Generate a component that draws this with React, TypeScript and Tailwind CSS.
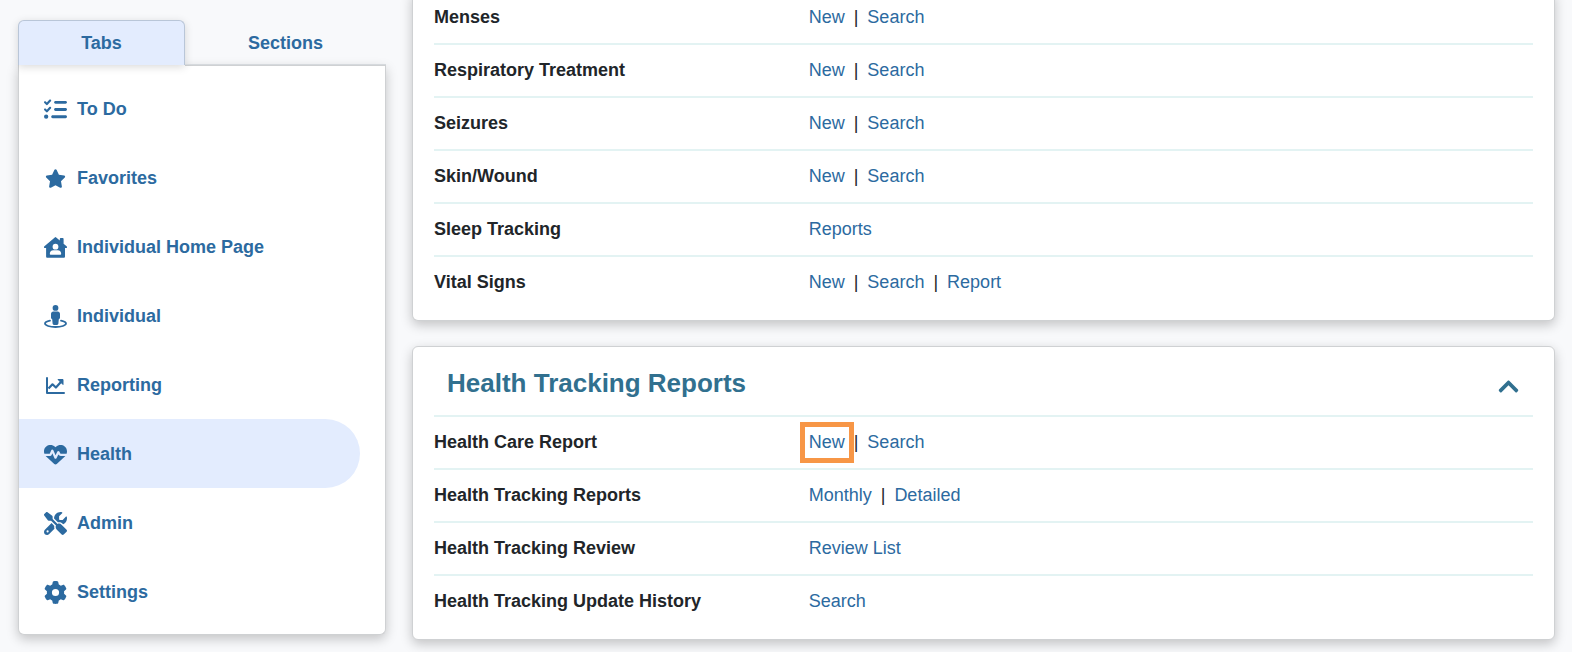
import { useState } from 'react';
import type { IconType } from 'react-icons';
import { FaChevronUp } from 'react-icons/fa';
import { FaGear, FaHeartPulse, FaListCheck, FaScrewdriverWrench, FaStar } from 'react-icons/fa6';

type Row = { label: string; links: string[]; marked?: string };

const ChartIcon = ({ className }: { className?: string }) => (
  <svg viewBox="0 0 19 17" fill="none" stroke="currentColor" className={className} aria-hidden="true">
    <path d="M1 1v15h17" strokeWidth="2" strokeLinecap="round" strokeLinejoin="round" />
    <path d="M2.5 11.5l4-4.2 3.4 3.2 5-5.4" strokeWidth="2.2" strokeLinejoin="round" />
    <path d="M12 2.5h5v5z" fill="currentColor" strokeWidth="1" strokeLinejoin="round" />
  </svg>
);

const HomeUserIcon = ({ className }: { className?: string }) => (
  <svg viewBox="0 0 23 21" className={className} aria-hidden="true">
    <path
      fill="currentColor"
      fillRule="evenodd"
      d="M10.8.4a1 1 0 0 1 1.4 0L15.8 3.4V2a.9.9 0 0 1 .9-.9h2a.9.9 0 0 1 .9.9v4.7l3 2.6c.8.8.4 1.8-.6 1.8h-1v8.4c0 .8-.5 1.3-1.3 1.3H3.400c-.8 0-1.3-.5-1.3-1.3v-8.4H1c-1 0-1.4-1-.6-1.8zM11.500 6.800a2.9 2.9 0 1 0 0 5.800 2.9 2.9 0 0 0 0-5.8zM9.300 13.300c-2.2 0-3.5 1.5-3.5 3.6 0 .5.3.8.8.8h9.8c.5 0 .8-.3.8-.8 0-2.1-1.3-3.6-3.5-3.6z"
    />
  </svg>
);

const PersonRingIcon = ({ className }: { className?: string }) => (
  <svg viewBox="0 0 23 23" fill="currentColor" className={className} aria-hidden="true">
    <circle cx="11.500" cy="2.900" r="2.900" />
    <path d="M9.300 6.600h4.400c1.300 0 2.300 1 2.300 2.300v3.700c0 .8-.5 1.400-1.200 1.600l-.4 4.400c-.1.800-.6 1.300-1.400 1.300H10c-.8 0-1.300-.5-1.400-1.300l-.4-4.400C7.500 14 7 13.400 7 12.600V8.900c0-1.300 1-2.300 2.300-2.300z" />
    <path
      d="M6 15.600c-3 .6-5 1.700-5 3 0 1.900 4.700 3.400 10.500 3.400S22 20.500 22 18.600c0-1.300-2-2.400-5-3"
      fill="none"
      stroke="currentColor"
      strokeWidth="1.800"
      strokeLinecap="round"
    />
  </svg>
);

const NAV: { label: string; icon: IconType | typeof ChartIcon; size: string }[] = [
  { label: 'To Do', icon: FaListCheck, size: 'size-[23px]' },
  { label: 'Favorites', icon: FaStar, size: 'size-[21px]' },
  { label: 'Individual Home Page', icon: HomeUserIcon, size: 'w-[23px] h-[21px]' },
  { label: 'Individual', icon: PersonRingIcon, size: 'size-[23px]' },
  { label: 'Reporting', icon: ChartIcon, size: 'w-[19px] h-[17px]' },
  { label: 'Health', icon: FaHeartPulse, size: 'size-[23px]' },
  { label: 'Admin', icon: FaScrewdriverWrench, size: 'size-[23px]' },
  { label: 'Settings', icon: FaGear, size: 'size-[23px]' },
];

const TRACKING: Row[] = [
  { label: 'Menses', links: ['New', 'Search'] },
  { label: 'Respiratory Treatment', links: ['New', 'Search'] },
  { label: 'Seizures', links: ['New', 'Search'] },
  { label: 'Skin/Wound', links: ['New', 'Search'] },
  { label: 'Sleep Tracking', links: ['Reports'] },
  { label: 'Vital Signs', links: ['New', 'Search', 'Report'] },
];

const REPORTS: Row[] = [
  { label: 'Health Care Report', links: ['New', 'Search'], marked: 'New' },
  { label: 'Health Tracking Reports', links: ['Monthly', 'Detailed'] },
  { label: 'Health Tracking Review', links: ['Review List'] },
  { label: 'Health Tracking Update History', links: ['Search'] },
];

function LinkTable({ rows }: { rows: Row[] }) {
  return (
    <table className="w-full border-separate border-spacing-0 text-lg leading-[23px]">
      <tbody className="[&>tr:not(:last-child)>*]:border-b-2">
        {rows.map((row) => (
          <tr key={row.label}>
            <th scope="row" className="w-[34%] border-[#e3f3f3] py-[14px] text-left font-bold text-[#212529]">
              {row.label}
            </th>
            <td className="border-[#e3f3f3] py-[14px] pl-px">
              {row.links.map((link, i) => (
                <span key={link}>
                  {i > 0 && <span className="px-[9px] text-[#212529]">|</span>}
                  <a
                    href="#"
                    className={`inline-block text-[#2c6aa0] hover:underline ${
                      row.marked === link ? 'outline-5 outline-offset-4 outline-[#f79646]' : ''
                    }`}
                  >
                    {link}
                  </a>
                </span>
              ))}
            </td>
          </tr>
        ))}
      </tbody>
    </table>
  );
}

export default function App() {
  const [tab, setTab] = useState('Tabs');
  const [open, setOpen] = useState(true);

  return (
    <div className="flex items-start gap-[26px] overflow-hidden bg-[#f8f9fb] pr-[17px] pb-3 pl-[18px] font-['Liberation_Sans',Arial,sans-serif]">
      <aside className="mt-5 w-[368px] shrink-0 text-lg font-bold text-[#2c6aa0]">
        <div className="flex h-[45px]">
          {['Tabs', 'Sections'].map((t) => (
            <button
              key={t}
              onClick={() => setTab(t)}
              className={
                tab === t
                  ? 'w-[167px] rounded-t-md border border-b-0 border-[#b9c6d8] bg-[#e3ecfe] shadow-[0_2px_8px_rgba(0,0,0,0.15)]'
                  : 'flex-1 border-y border-t-transparent border-b-[#d5d9dd]'
              }
            >
              {t}
            </button>
          ))}
        </div>
        <nav className="rounded-b-md border border-t-0 border-[#cfd1d3] bg-white shadow-[0_4px_12px_rgba(0,0,0,0.22)]">
          <div className="ml-[166px] border-t border-[#cfd1d3]" />
          <div className="py-2">
            {NAV.map(({ label, icon: Icon, size }) => (
              <a
                key={label}
                href="#"
                className={`mr-[25px] flex h-[69px] items-center gap-[10px] rounded-r-full pl-[25px] ${
                  label === 'Health' ? 'bg-[#e3ecfe]' : ''
                }`}
              >
                <span className="flex w-[23px] justify-center pt-[2px]">
                  <Icon className={size} />
                </span>
                {label}
              </a>
            ))}
          </div>
        </nav>
      </aside>

      <main className="min-w-0 flex-1">
        <section className="-mt-2 rounded-b-md border border-t-0 border-[#cfd1d3] bg-white px-[21px] pb-3 shadow-[0_4px_12px_rgba(0,0,0,0.22)]">
          <LinkTable rows={TRACKING} />
        </section>

        <section className="mt-[25px] rounded-md border border-[#cfd1d3] bg-white px-[21px] pb-3 shadow-[0_4px_12px_rgba(0,0,0,0.22)]">
          <div className="flex h-[70px] items-center justify-between border-b-2 border-[#e3f3f3] pt-1 pr-[13px] pl-[13px] text-[#31708f]">
            <h2 className="text-[26px] leading-8 font-bold">Health Tracking Reports</h2>
            <button
              className="pt-[6px]"
              aria-label="Toggle Health Tracking Reports"
              aria-expanded={open}
              onClick={() => setOpen(!open)}
            >
              <FaChevronUp className={open ? 'size-[23px]' : 'size-[23px] rotate-180'} />
            </button>
          </div>
          {open && <LinkTable rows={REPORTS} />}
        </section>
      </main>
    </div>
  );
}
